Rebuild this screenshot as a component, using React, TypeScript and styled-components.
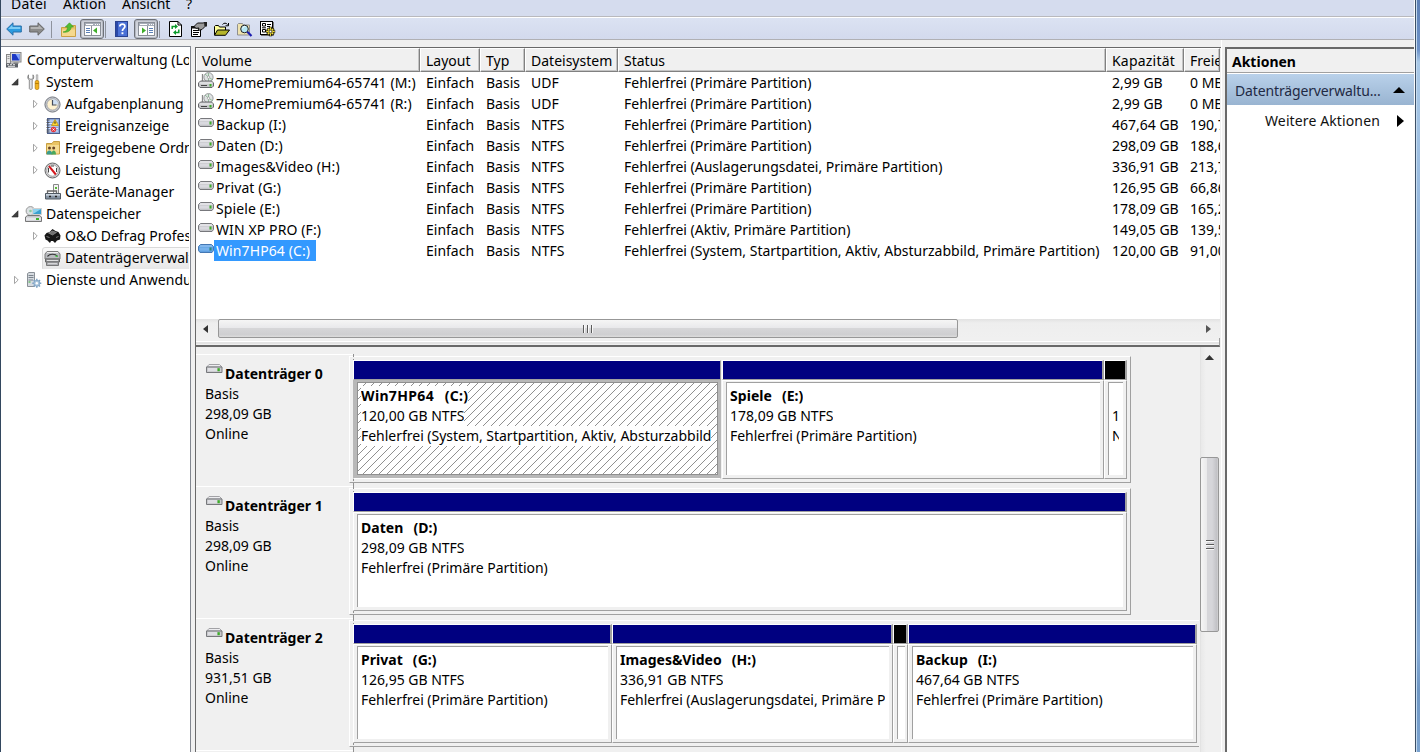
import React from 'react';
import styled, { createGlobalStyle, css } from 'styled-components';

const Global = createGlobalStyle`
  * { box-sizing: border-box; }
  html, body { margin: 0; padding: 0; overflow: hidden; }
  body { font-family: "Noto Sans", "Open Sans", sans-serif; font-size: 14px; color: #000; background: #f0f0f0; }
  svg { display: block; flex: none; }
`;

/* ---------- window frame ---------- */
const Window = styled.div`
  width: 1420px; height: 752px; display: flex; overflow: hidden; background: #f0f0f0;
`;
const LeftEdge = styled.div` width: 1px; background: #33475f; `;
const RightEdge = styled.div`
  width: 5px; border-left: 1px solid #3c4f66;
  background: linear-gradient(90deg, #c5dbef 0 1px, transparent 1px),
    linear-gradient(#5d80b5 0, #6d92c8 50px, #a9c8e6 62px, #8cb0da 300px, #86abd6 520px, #6f98c5 560px, #85abd6 650px, #6f97c4 690px, #7ba3d0 100%);
`;
const Frame = styled.div`
  width: 1414px; display: flex; flex-direction: column; border-right: 1px solid #fbfbfb;
`;
const MenuBar = styled.div`
  height: 17px; background: #d5dcee; border-bottom: 1px solid #b9b9bd; display: flex; overflow: hidden; position: relative;
`;
const MenuItem = styled.span<{ $w: number; $ls?: number }>`
  display: block; width: ${p => p.$w}px; line-height: 20px; margin-top: -6px; padding-left: 10px; white-space: nowrap;
  letter-spacing: ${p => p.$ls ?? 0}px;
`;
const ToolBar = styled.div`
  height: 23px; border-top: 1px solid #fff; border-bottom: 1px solid #b0b0b4; background: linear-gradient(#dbe2f2, #d3daed);
  display: flex; align-items: center; padding: 1px 0 0 5px;
`;
const Tool = styled.div<{ $ml?: number }>` margin-left: ${p => p.$ml ?? 7}px; `;
const ToolPressed = styled.div<{ $ml: number }>`
  width: 24px; height: 20px; margin-left: ${p => p.$ml}px; border: 1px solid #6d7077; border-radius: 3px;
  background: linear-gradient(#c9ccd4, #dfe2ea); box-shadow: inset 0 0 0 1px #b4b8c2;
  display: flex; align-items: center; justify-content: center;
`;
const ToolSep = styled.div<{ $ml: number }>` width: 1px; height: 17px; margin-left: ${p => p.$ml}px; background: #8e939d; `;

const Main = styled.div` flex: 1; display: flex; min-height: 0; `;

/* ---------- navigation tree ---------- */
const TreePane = styled.div`
  width: 190px; margin-top: 6px; border-top: 1px solid #828790; border-right: 1px solid #828790; background: #fff; padding: 2px 1px 0 0;
`;
const TreeRow = styled.div<{ $level: number; $sel?: boolean }>`
  height: 22px; display: flex; align-items: center; overflow: hidden; padding-left: ${p => [5, 10, 29][p.$level]}px; position: relative;
  ${p => p.$sel && css`
    &::before { content: ''; position: absolute; left: 41px; right: -4px; top: 0; height: 22px;
      border: 1px solid #d9d9d9; border-radius: 3px; background: linear-gradient(#fafafa, #e6e6e6); }
  `}
`;
const Expander = styled.div` width: 14px; flex: none; display: flex; `;
const TreeIcon = styled.div<{ $gap: number }>`
  position: relative; width: ${p => (p.$gap === 4 ? 17 : 16)}px; flex: none; display: flex; justify-content: center; margin-right: ${p => p.$gap}px;
`;
const TreeText = styled.span<{ $ls?: number }>`
  position: relative; white-space: nowrap; line-height: 20px; letter-spacing: ${p => p.$ls ?? 0}px;
`;

/* ---------- centre pane ---------- */
const Centre = styled.div`
  width: 1026px; margin: 7px 0 0 4px; border-top: 1px solid #696969; border-left: 1px solid #696969; 
  display: flex; flex-direction: column;
`;
const VolumeArea = styled.div` height: 271px; width: 1024px; background: #fff; overflow: hidden; `;
const cols = '224px 60px 45px 93px 488px 78px 1fr';
const HeadRow = styled.div` display: grid; grid-template-columns: ${cols}; height: 24px; width: 1024px; `;
const HeadCell = styled.div<{ $ls?: number }>`
  background: #f0f0f0; border: 1px solid #fff; border-right: 1px solid #808080; border-bottom: 1px solid #808080;
  box-shadow: inset -1px -1px 0 #c4c4c4; padding-left: 5px; line-height: 23px; white-space: nowrap; overflow: hidden;
  letter-spacing: ${p => p.$ls ?? 0}px;
`;
const VolRow = styled.div` display: grid; grid-template-columns: ${cols}; height: 21px; width: 1024px; `;
const VolName = styled.div` display: flex; align-items: flex-start; padding-left: 2px; `;
const VolLabel = styled.span<{ $sel?: boolean }>`
  height: 21px; line-height: 21px; padding: 0 ${p => (p.$sel ? 6 : 0)}px 0 2px; white-space: nowrap; letter-spacing: 0.1px;
  ${p => p.$sel && css` background: #3399ff; color: #fff; `}
`;
const VolCell = styled.div`
  padding-left: 6px; line-height: 21px; white-space: nowrap; overflow: hidden;
`;
const HScroll = styled.div`
  height: 19px; display: flex; align-items: center; width: 1024px; background: linear-gradient(#e2e2e2, #eeeeee 4px, #f0f0f0); padding-left: 7px;
`;
const HThumb = styled.div`
  width: 740px; height: 19px; margin-left: 10px; border: 1px solid #979797; border-radius: 2px; display: flex; justify-content: center; align-items: center;
  background: linear-gradient(#f5f5f5, #e9e9eb 45%, #d6d6d8 50%, #cfcfd1 85%, #dcdcdc);
`;
const Grow = styled.div` flex: 1; `;
const Splitter = styled.div`
  height: 9px; background: linear-gradient(#f0f0f0 0 3px, #fff 3px 4px, #e4e4e4 4px 6px, #f0f0f0 6px);
  border-bottom: 2px solid #696969; margin-right: 1px; border-right: 1px solid #a0a0a0;
`;
const DiskArea = styled.div` flex: 1; display: flex; min-height: 0; `;
const DiskList = styled.div` width: 1003px; padding-top: 7px; overflow: hidden; `;
const DiskRow = styled.div` height: 131px; margin-bottom: 1px; display: flex; `;
const DiskLabel = styled.div`
  width: 153px; flex: none; padding: 10px 0 0 9px; position: relative;
  &::before { content: ''; position: absolute; left: 0; top: 0; width: 158px; height: 131px; border-top: 1px solid #fff; border-bottom: 1px solid #a0a0a0; }
  &::after { content: ''; position: absolute; left: 157px; top: 0; height: 132px; border-left: 1px dashed #909090; }
`;
const DiskTitle = styled.div`
  display: flex; font-weight: 700; line-height: 20px; gap: 2px; height: 20px; white-space: nowrap; padding-left: 1px;
`;
const DiskLine = styled.div` line-height: 20px; height: 20px; white-space: nowrap; `;
const Graph = styled.div<{ $w: number }>`
  width: ${p => p.$w}px; flex: none; height: 127px; margin-top: 2px; padding: 3px 3px 3px 3px; display: flex;
  border: 1px solid #a0a0a0; border-top-color: #fff; border-left-color: #fff;
`;
const Part = styled.div<{ $w: number; $gap?: number }>`
  width: ${p => p.$w}px; height: 119px; margin-right: ${p => p.$gap ?? 0}px; position: relative; flex: none;
`;
const PartBar = styled.div<{ $c: string; $thin?: boolean }>`
  height: 20px; background: ${p => p.$c}; border: 1px solid #fff; border-bottom-color: #a0a0a0;
  border-right: ${p => (p.$thin ? 1 : 2)}px solid #a0a0a0;
`;
const PartBody = styled.div<{ $sel?: boolean }>`
  height: 99px; padding: 1px 3px 3px 3px; border: 1px solid #fff; border-right-color: #a0a0a0; border-bottom-color: #a0a0a0;
  ${p => p.$sel && css` background: #b8b8b8; border-color: #b8b8b8; padding-right: 2px; border-bottom-color: #fff; `}
`;
const PartInner = styled.div<{ $sel?: boolean }>`
  height: 93px; background: #fff; border-left: 1px solid #a0a0a0; border-top: 1px solid #a0a0a0; overflow: hidden; position: relative; padding: 3px 4px 0 3px;
  ${p => p.$sel && css` border: 1px solid #909090; `}
`;
const Hatch = styled.svg` position: absolute; left: 0; top: 0; `;
const PartLine = styled.div<{ $b?: boolean; $ls?: number }>`
  position: relative; width: fit-content; max-width: 100%; overflow: hidden; height: 20px; line-height: 20px; background: #fff;
  white-space: pre; font-weight: ${p => (p.$b ? 700 : 400)}; letter-spacing: ${p => p.$ls ?? -0.02}px; word-spacing: ${p => (p.$b ? 1.3 : 0)}px;
`;
const VScroll = styled.div`
  width: 20px; margin-left: 1px; border-left: 1px solid #e3e3e3; background: linear-gradient(90deg, #e9e9e9, #f0f0f0 5px);
  display: flex; flex-direction: column; align-items: center; padding: 8px 2px 0 0;
`;
const VThumb = styled.div`
  width: 19px; height: 175px; margin: 97px 0 0 0; border: 1px solid #979797; border-radius: 2px; display: flex; justify-content: center; align-items: center;
  background: linear-gradient(90deg, #f5f5f5, #e9e9eb 35%, #d6d6da 38%, #d6d6da 65%, #c0c0c4 95%, #dcdcdc);
`;
const Seam = styled.div` width: 4px; border-left: 1px solid #fff; background: #f0f0f0; `;

/* ---------- actions pane ---------- */
const Actions = styled.div`
  flex: 1; margin-top: 7px; border-left: 2px solid #696969; border-top: 2px solid #696969; background: #fff;
`;
const ActHead = styled.div`
  height: 24px; background: #f0f0f0; border-bottom: 1px solid #a0a0a0; padding-left: 5px; font-weight: 700; line-height: 26px; 
`;
const ActGroup = styled.div`
  height: 31px; margin-top: 1px; background: linear-gradient(#b9d1ea, #99b4d1); color: #1f2a44; display: flex; align-items: center; justify-content: space-between;
  padding: 1px 9px 0 8px; white-space: nowrap; letter-spacing: -0.14px;
`;
const ActItem = styled.div`
  height: 31px; display: flex; align-items: center; justify-content: space-between; padding: 0 10px 0 38px; white-space: nowrap; color: #111; letter-spacing: 0.12px;
`;

/* ---------- icons ---------- */
const Arrow = ({ c1, c2, st, flip }: { c1: string; c2: string; st: string; flip?: boolean }) => (
  <svg width="16" height="14" viewBox="0 0 16 14">
    <g transform={flip ? 'translate(16 0) scale(-1 1)' : undefined}>
      <path d="M.7 7 7 .8V4h8.3v6H7v3.2Z" fill={c1} stroke={st} />
      <path d="M2.2 7 6.3 3v2h8v2Z" fill={c2} />
    </g>
  </svg>
);
const FolderUp = () => (
  <svg width="15" height="15" viewBox="0 0 15 15">
    <path d="M.5 5.500H6l1-2h7.500V14.500H.5Z" fill="#e9c46a" stroke="#c9a045" />
    <path d="M1 7.500h13v6.500H1Z" fill="#f5d98e" />
    <path d="M2 10c3.500-.5 4.500-2.500 4.500-5H4.300L8.500.8l4 4.200h-2.300C10 8.500 7 11 2 10Z" fill="#52bd35" stroke="#3a9a20" strokeWidth=".6" />
  </svg>
);
const PanelIcon = ({ right }: { right?: boolean }) => (
  <svg width="17" height="14" viewBox="0 0 17 14" shapeRendering="crispEdges">
    <rect x=".5" y=".5" width="16" height="13" fill="#fff" stroke="#8a8f98" />
    <path d="M1 1h15v3H1Z" fill="#a7adb8" />
    <path d="M2 2.500h7M11 2.500h1M13 2.500h1M15 2.500h1" stroke="#fff" />
    <path d={right ? 'M9.500 4v9' : 'M7.500 4v9'} stroke="#8a8f98" />
    <path d={right ? 'M11 6.500h4M11 8.500h4M11 10.500h4' : 'M2 6.500h4M2 8.500h4M2 10.500h4'} stroke="#5b80b8" />
    <path d={right ? 'M4 5.500v6l4-3Z' : 'M13 5.500v6l-4-3Z'} fill="#3fae2a" shapeRendering="auto" />
  </svg>
);
const HelpIcon = () => (
  <svg width="13" height="16" viewBox="0 0 13 16">
    <rect x=".5" y=".5" width="12" height="15" fill="#4a70d6" stroke="#2a4290" />
    <path d="M1 1h2v14H1Z" fill="#2a48a8" />
    <path d="M4.800 5.400C4.800 2.400 9.900 2.500 9.900 5.400 9.900 7.400 7.400 7.300 7.400 10" fill="none" stroke="#fff" strokeWidth="1.700" />
    <rect x="6.500" y="11.300" width="1.900" height="1.900" fill="#fff" />
  </svg>
);
const RefreshDoc = () => (
  <svg width="13" height="16" viewBox="0 0 13 16">
    <path d="M.5.5h8.500l3.500 3.500v11.500H.5Z" fill="#fff" stroke="#000" />
    <path d="M9 .5V4h3.500" fill="none" stroke="#000" />
    <path d="M3.200 8V5.500H7" fill="none" stroke="#0a9a2a" strokeWidth="1.500" /><path d="M6 3 9 5.500 6 8Z" fill="#0a9a2a" />
    <path d="M9.800 8.500v3H6" fill="none" stroke="#0a9a2a" strokeWidth="1.500" /><path d="M7 9 4 11.500 7 14Z" fill="#0a9a2a" />
  </svg>
);
const PropsIcon = () => (
  <svg width="16" height="15" viewBox="0 0 16 15">
    <path d="M.5 4.500h9v10h-9Z" fill="#fff" stroke="#000" />
    <path d="M0 4h9v2.500H0Z" fill="#111" />
    <path d="M2 8.500h6M2 10.500h6M2 12.500h5" stroke="#000" />
    <path d="M3 4.500 6.500 1H12l2-.5v4L11 7.500 7 8.500 8 6 5 6.300Z" fill="#9a9a9a" stroke="#000" strokeWidth=".9" />
    <path d="M13 0h3v4.500h-2Z" fill="#222" />
  </svg>
);
const OpenFolder = () => (
  <svg width="16" height="14" viewBox="0 0 16 14">
    <path d="M.5 13V4.500l1-1h3l1 1.500h6v3" fill="#ffff9a" stroke="#000" />
    <path d="M.5 13.300 3.500 8h12l-4 5.300Z" fill="#b5b52a" stroke="#000" />
    <path d="M8.500 2.500c1.500-1.800 3.500-1.800 5 0M14.500 1v2.800h-3" fill="none" stroke="#000" />
  </svg>
);
const FindFolder = () => (
  <svg width="16" height="15" viewBox="0 0 16 15">
    <path d="M.5 13V2.500l1-1h4l1 1.500h6V13Z" fill="#efe3ae" stroke="#8f8f8f" />
    <circle cx="7.500" cy="7" r="3.800" fill="#b4e6f5" stroke="#222" />
    <path d="M5.500 6.500c.5-1.500 1.500-2 3-2" fill="none" stroke="#fff" />
    <path d="m10.300 9.800 4.200 4.200" stroke="#1b1bb0" strokeWidth="2.200" />
  </svg>
);
const SettingsIcon = () => (
  <svg width="16" height="16" viewBox="0 0 16 16">
    <rect x=".5" y=".5" width="12" height="13" fill="#fff" stroke="#000" />
    <path d="M13.500 1v13.500H1" fill="none" stroke="#777" />
    <path d="M2.500 2.500h3v2.500h-3ZM2.500 8.500h3v2.500h-3Z" fill="#fff" stroke="#000" />
    <path d="M7 3.500h4M7 5.500h3M2 6.800h4" stroke="#000" />
    <g stroke="#000" strokeWidth="2.600"><path d="M10.500 5.800v9.400M5.800 10.500h9.400M7.300 7.300l6.400 6.400M13.700 7.300l-6.400 6.400" /></g>
    <g stroke="#f4e13a" strokeWidth="1.300"><path d="M10.500 6.300v8.400M6.300 10.500h8.400M7.700 7.700l5.600 5.600M13.300 7.700l-5.600 5.600" /></g>
    <circle cx="10.500" cy="10.500" r="1.300" fill="#fff" stroke="#000" strokeWidth=".7" />
  </svg>
);
const ComputerIcon = () => (
  <svg width="16" height="16" viewBox="0 0 16 16">
    <rect x="4.500" y=".5" width="10.500" height="9.500" fill="#d8d8d8" stroke="#888" />
    <rect x="6" y="2" width="7.500" height="6.500" fill="#1d39c4" />
    <path d="M9.500 2h4v6.500Z" fill="#7fa4ff" />
    <rect x=".5" y="2.500" width="4" height="9" fill="#e4e4e4" stroke="#888" />
    <path d="M1.500 4.500h2M1.500 6.500h2" stroke="#999" />
    <path d="M7.500 10h5v2h-5Z" fill="#999" />
    <path d="M0 11.500h12v4H0Z" fill="#5a5f66" />
    <path d="M1 12.700h2M4 12.700h2M7 12.700h2M2 14.300h7" stroke="#e8e8e8" />
  </svg>
);
const ToolsIcon = () => (
  <svg width="16" height="16" viewBox="0 0 16 16">
    <path d="M2.500.8C1 3 2 5.500 3.300 6V14.500c0 1.200 2.900 1.200 2.900 0V6C7.500 5.500 8.500 3 7 .8v3.400l-1 1H4l-1.500-1Z" fill="#dfe1e4" stroke="#777" strokeWidth=".8" />
    <path d="M10.300.8h1.500v6h-1.500Z" fill="#e0e0e0" stroke="#888" strokeWidth=".6" />
    <rect x="9.200" y="6.500" width="3.600" height="9" rx="1.400" fill="#f2b21d" stroke="#b77d06" strokeWidth=".8" />
    <path d="M9.200 9.500h3.600" stroke="#b77d06" />
  </svg>
);
const ClockIcon = () => (
  <svg width="17" height="17" viewBox="0 0 17 17">
    <circle cx="8.500" cy="8.500" r="7.600" fill="#c3c6cc" stroke="#777b83" />
    <circle cx="8.500" cy="8.500" r="5.600" fill="#fff2d0" stroke="#9a9ea6" strokeWidth=".8" />
    <path d="M8.500 2.900a5.600 5.600 0 0 1 5.600 5.600H8.500Z" fill="#cfe0f4" />
    <path d="M8.500 4v5h4" fill="none" stroke="#444c5c" strokeWidth="1.200" />
  </svg>
);
const EventIcon = () => (
  <svg width="16" height="16" viewBox="0 0 16 16">
    <rect x="2.500" y=".5" width="12" height="15" fill="#8ea9dc" stroke="#4d5f8c" />
    <path d="M4 3h9M4 5.500h9M4 8h9M4 10.500h9M4 13h9" stroke="#dfe8f8" />
    <path d="M1.500 2h3M1.500 4.500h3M1.500 7h3M1.500 9.500h3M1.500 12h3M1.500 14h3" stroke="#555" />
    <path d="M10 1.500 13.500 7.500h-7Z" fill="#ffd633" stroke="#b58a00" strokeWidth=".7" />
    <path d="M10 3.500v2.200" stroke="#222" />
    <circle cx="8.500" cy="11.500" r="2.700" fill="#e2383f" /><path d="m7.500 10.500 2 2M9.500 10.500l-2 2" stroke="#fff" strokeWidth=".9" />
  </svg>
);
const SharedIcon = () => (
  <svg width="16" height="16" viewBox="0 0 16 16">
    <path d="M1.500 3.500h5.500l1.500-2h6V14h-13Z" fill="#eac464" stroke="#c79f43" />
    <path d="M2 5h12v8.500H2Z" fill="#f6dc92" />
    <circle cx="4.500" cy="8" r="1.500" fill="#684524" /><path d="M1.500 14.500c0-5.500 5.500-5.500 6 0Z" fill="#3a9c8f" />
    <circle cx="8.700" cy="8" r="1.500" fill="#684524" /><path d="M6.500 14.500c0-5.500 4.500-5.500 4.500 0Z" fill="#4aa85a" />
  </svg>
);
const GaugeIcon = () => (
  <svg width="17" height="17" viewBox="0 0 17 17">
    <circle cx="8.500" cy="8.500" r="7.500" fill="#d3d3d6" stroke="#666" />
    <circle cx="8.500" cy="8.500" r="5.700" fill="#fff" stroke="#888" strokeWidth=".7" />
    <path d="m5 4.200 6.800 8.300" stroke="#d4161c" strokeWidth="2" />
    <path d="M4.500 6v4.500M12.500 6v4M7 4h3" stroke="#444" />
  </svg>
);
const DeviceIcon = () => (
  <svg width="16" height="16" viewBox="0 0 16 16">
    <path d="M8.500.5h5v9h-5Z" fill="#f5f5f5" stroke="#888" /><path d="M10 3h2v2h-2Z" fill="#58b83a" />
    <path d="M2.500 9V7h9v2" fill="none" stroke="#666" strokeWidth="1.300" />
    <path d="M.5 9.500h15v5.500H.5Z" fill="#8593a3" stroke="#4f5963" />
    <path d="M1 10h14v1.700H1Z" fill="#c8d2dc" /><path d="M4 12.500h2M10 12.500h2" stroke="#222" strokeWidth="1.500" />
  </svg>
);
const StorageIcon = () => (
  <svg width="17" height="16" viewBox="0 0 17 16">
    <circle cx="5.500" cy="5" r="4.400" fill="#dce1e4" stroke="#999" /><circle cx="5.500" cy="5" r="1.300" fill="#8fc8a0" />
    <path d="M7.500 2.500h9v6h-9Z" fill="#3aa0cf" stroke="#d0d0d0" /><path d="M8 3h8L8 8Z" fill="#8fd2ee" />
    <path d="M2.500 9.500h12l2 1.500v4.500H.5V11Z" fill="#c4c6ca" stroke="#777" />
    <path d="M1 11.500h15v3H1Z" fill="#e6e6ea" /><path d="M11 12h3v2h-3Z" fill="#3fb22c" />
  </svg>
);
const DefragIcon = () => (
  <svg width="17" height="16" viewBox="0 0 17 16">
    <path d="M.5 7.500 2.500 5l3-1L8.500 1l3 2 3 1 2 3.500-.5 4-3 1L11 15l-2-2H7l-1 2-2.500-2.500-2-1Z" fill="#161616" />
    <path d="M4.500 5 8.500 3l4 1.500-4 2.500Z" fill="#707070" stroke="#9a9a9a" strokeWidth=".6" />
    <path d="m2.500 8.500 3 1M12 9.500l2.500-1" stroke="#777" />
  </svg>
);
const DiskMgmtIcon = () => (
  <svg width="17" height="17" viewBox="0 0 17 17">
    <path d="M3 1.500h11l2 2.500v5H1V4Z" fill="#b9bbbf" stroke="#7a7a7a" />
    <path d="M3 2.500h11" stroke="#eee" /><path d="M3.500 6.500c2-3 8-3 10 0" fill="none" stroke="#333" strokeWidth="1.200" />
    <path d="M11.500 5.500h2v1.500h-2Z" fill="#4c4" />
    <path d="M1.500 9h14v3h-14Z" fill="#9b9da1" stroke="#666" /><path d="M2.500 12h12v3.500h-12Z" fill="#a9abaf" stroke="#777" />
    <path d="M3 10.500h11M4 13.700h9" stroke="#e0e0e0" />
  </svg>
);
const ServicesIcon = () => (
  <svg width="16" height="17" viewBox="0 0 16 17">
    <path d="M1.500 1.500 3 .5h5.500v14H1.500Z" fill="#d6dbe0" stroke="#8a9097" />
    <path d="M2.500 3.500H7.500M2.500 5.500H7.500M2.500 8H7" stroke="#7b838c" /><path d="M2.500 10h2" stroke="#3a3" />
    <g stroke="#7fa3c4" strokeWidth="1.500"><path d="M10.800 6.800v9M6.300 11.300h9M7.600 8.100l6.400 6.400M14 8.100l-6.400 6.400" /></g>
    <circle cx="10.800" cy="11.300" r="3" fill="#a9c4dc" stroke="#7fa3c4" strokeWidth=".8" /><circle cx="10.800" cy="11.300" r="1.200" fill="#fff" />
  </svg>
);
const Tri = ({ open }: { open?: boolean }) =>
  open ? (
    <svg width="8" height="8" viewBox="0 0 8 8"><path d="M7 .8v6.200H.8Z" fill="#404040" stroke="#262626" strokeWidth=".6" /></svg>
  ) : (
    <svg width="8" height="10" viewBox="0 0 8 10"><path d="M3.500 1.200v7.400L7.200 5Z" fill="#fff" stroke="#a5a5a5" /></svg>
  );
const DriveIcon = ({ blue }: { blue?: boolean }) => (
  <svg width="16" height="20" viewBox="0 -4 16 20">
    <path d="M2.500.5h11l2 2v4l-1.500 2H2L.5 6.500v-4Z" fill={blue ? '#5f9fe0' : '#c3c4c8'} stroke={blue ? '#4578b4' : '#77787c'} />
    <path d="M2.500 1.300h11l1 1.500h-13Z" fill={blue ? '#8fc0f2' : '#ececf0'} />
    <path d="M1.500 3.500h10v3.200h-10Z" fill={blue ? '#77b2ec' : '#d9d9df'} />
    <path d="M11.500 3.500h2v3h-2Z" fill={blue ? '#2f8a78' : '#3cae28'} />
  </svg>
);
const FlatDrive = () => (
  <svg width="17" height="10" viewBox="0 0 17 10">
    <path d="M3 .5h10.500l2.500 2.500H.8Z" fill="#ededf0" stroke="#a2a2a6" />
    <path d="M.5 3h15.500v5.500H.5Z" fill="#c9cacd" stroke="#77787c" />
    <path d="M2 4h9v3.200H2Z" fill="#dfdfe4" /><path d="M11.500 4.200h2.300v3h-2.300Z" fill="#3cae28" />
  </svg>
);
const OpticalIcon = () => (
  <svg width="16" height="18" viewBox="0 0 16 18">
    <circle cx="10.500" cy="5.200" r="4.600" fill="#dfe3e3" stroke="#97999c" />
    <path d="M10.500 5.200 7 2M10.500 5.200l4 2.500M10.500 1v8.500" stroke="#7fb089" strokeWidth=".8" /><circle cx="10.500" cy="5.200" r="1.200" fill="#fff" stroke="#888" strokeWidth=".6" />
    <path d="M4.500 2v7" stroke="#8a8a8a" strokeWidth="1.300" />
    <path d="M2.500 9h11l2 2v3L14 15.500H2L.5 14v-3Z" fill="#c6c7ca" stroke="#66676b" />
    <path d="M1.500 11h13" stroke="#f4f4f6" /><path d="M3 13.500h6" stroke="#444" /><path d="M11.500 12h2v2.500h-2Z" fill="#3cae28" />
  </svg>
);

/* ---------- data ---------- */
type Node = { t: string; l: 0 | 1 | 2; i: React.ReactNode; e?: 'o' | 'c'; sel?: boolean; ls?: number };
const tree: Node[] = [
  { t: 'Computerverwaltung (Lokal)', l: 0, i: <ComputerIcon /> },
  { t: 'System', l: 1, i: <ToolsIcon />, e: 'o' },
  { t: 'Aufgabenplanung', l: 2, i: <ClockIcon />, e: 'c' },
  { t: 'Ereignisanzeige', l: 2, i: <EventIcon />, e: 'c', ls: 0.05 },
  { t: 'Freigegebene Ordner', l: 2, i: <SharedIcon />, e: 'c' },
  { t: 'Leistung', l: 2, i: <GaugeIcon />, e: 'c', ls: -0.1 },
  { t: 'Geräte-Manager', l: 2, i: <DeviceIcon />, ls: 0.07 },
  { t: 'Datenspeicher', l: 1, i: <StorageIcon />, e: 'o', ls: -0.05 },
  { t: 'O&O Defrag Professional', l: 2, i: <DefragIcon />, e: 'c' },
  { t: 'Datenträgerverwaltung', l: 2, i: <DiskMgmtIcon />, sel: true },
  { t: 'Dienste und Anwendungen', l: 1, i: <ServicesIcon />, e: 'c' },
];
const P = 'Fehlerfrei (Primäre Partition)';
const volumes = [
  ['7HomePremium64-65741 (M:)', 'UDF', P, '2,99 GB', '0 MB'],
  ['7HomePremium64-65741 (R:)', 'UDF', P, '2,99 GB', '0 MB'],
  ['Backup (I:)', 'NTFS', P, '467,64 GB', '190,75 GB'],
  ['Daten (D:)', 'NTFS', P, '298,09 GB', '188,60 GB'],
  ['Images&Video (H:)', 'NTFS', 'Fehlerfrei (Auslagerungsdatei, Primäre Partition)', '336,91 GB', '213,70 GB'],
  ['Privat (G:)', 'NTFS', P, '126,95 GB', '66,86 GB'],
  ['Spiele (E:)', 'NTFS', P, '178,09 GB', '165,20 GB'],
  ['WIN XP PRO (F:)', 'NTFS', 'Fehlerfrei (Aktiv, Primäre Partition)', '149,05 GB', '139,50 GB'],
  ['Win7HP64 (C:)', 'NTFS', 'Fehlerfrei (System, Startpartition, Aktiv, Absturzabbild, Primäre Partition)', '120,00 GB', '91,00 GB'],
];
type PartT = { w: number; gap?: number; lines?: string[]; black?: boolean; sel?: boolean };
const disks: { n: string; size: string; w: number; parts: PartT[] }[] = [
  { n: 'Datenträger 0', size: '298,09 GB', w: 782, parts: [
    { w: 368, gap: 1, sel: true, lines: ['Win7HP64  (C:)', '120,00 GB NTFS', 'Fehlerfrei (System, Startpartition, Aktiv, Absturzabbild'] },
    { w: 382, lines: ['Spiele  (E:)', '178,09 GB NTFS', P] },
    { w: 23, black: true, lines: ['', '1', 'N'] }] },
  { n: 'Datenträger 1', size: '298,09 GB', w: 782, parts: [{ w: 774, lines: ['Daten  (D:)', '298,09 GB NTFS', P] }] },
  { n: 'Datenträger 2', size: '931,51 GB', w: 860, parts: [
    { w: 259, lines: ['Privat  (G:)', '126,95 GB NTFS', P] },
    { w: 281, lines: ['Images&Video  (H:)', '336,91 GB NTFS', 'Fehlerfrei (Auslagerungsdatei, Primäre Partition)'] },
    { w: 15, black: true },
    { w: 289, lines: ['Backup  (I:)', '467,64 GB NTFS', P] }] },
];

export default function App() {
  return (
    <Window>
      <Global />
      <LeftEdge />
      <Frame>
        <MenuBar>
          <MenuItem $w={52} $ls={0.25}>Datei</MenuItem>
          <MenuItem $w={59} $ls={0.2}>Aktion</MenuItem>
          <MenuItem $w={64}>Ansicht</MenuItem>
          <MenuItem $w={30}>?</MenuItem>
        </MenuBar>
        <ToolBar>
          <Tool $ml={0}><Arrow c1="#2b9be0" c2="#7cccf5" st="#2a6ea8" /></Tool>
          <Tool><Arrow c1="#8b8b8b" c2="#b4b4b4" st="#666" flip /></Tool>
          <ToolSep $ml={6} />
          <Tool $ml={9}><FolderUp /></Tool>
          <ToolPressed $ml={4}><PanelIcon /></ToolPressed>
          <ToolSep $ml={1} />
          <Tool $ml={9}><HelpIcon /></Tool>
          <ToolPressed $ml={6}><PanelIcon right /></ToolPressed>
          <ToolSep $ml={1} />
          <Tool $ml={9}><RefreshDoc /></Tool>
          <Tool $ml={9}><PropsIcon /></Tool>
          <Tool><OpenFolder /></Tool>
          <Tool><FindFolder /></Tool>
          <Tool><SettingsIcon /></Tool>
        </ToolBar>
        <Main>
          <TreePane>
            {tree.map(n => (
              <TreeRow key={n.t} $level={n.l} $sel={n.sel}>
                {n.l > 0 && <Expander>{n.e && <Tri open={n.e === 'o'} />}</Expander>}
                <TreeIcon $gap={n.l === 0 ? 5 : 4}>{n.i}</TreeIcon>
                <TreeText $ls={n.ls}>{n.t}</TreeText>
              </TreeRow>
            ))}
          </TreePane>
          <Centre>
            <VolumeArea>
              <HeadRow>
                {['Volume', 'Layout', 'Typ', 'Dateisystem', 'Status', 'Kapazität', 'Freier Speicher'].map(h => (
                  <HeadCell key={h} $ls={h === 'Kapazität' ? 0.2 : 0}>{h}</HeadCell>
                ))}
              </HeadRow>
              {volumes.map((v, i) => (
                <VolRow key={v[0]}>
                  <VolName>
                    {i < 2 ? <OpticalIcon /> : <DriveIcon blue={i === 8} />}
                    <VolLabel $sel={i === 8}>{v[0]}</VolLabel>
                  </VolName>
                  <VolCell>Einfach</VolCell>
                  <VolCell>Basis</VolCell>
                  <VolCell>{v[1]}</VolCell>
                  <VolCell>{v[2]}</VolCell>
                  <VolCell>{v[3]}</VolCell>
                  <VolCell>{v[4]}</VolCell>
                </VolRow>
              ))}
            </VolumeArea>
            <HScroll>
              <svg width="5" height="8"><path d="M5 0v8L0 4Z" fill="#333" /></svg>
              <HThumb>
                <svg width="10" height="8" shapeRendering="crispEdges"><path d="M.5 0v8M4.500 0v8M8.500 0v8" stroke="#5a5a5a" /><path d="M1.500 0v8M5.500 0v8M9.500 0v8" stroke="#f8f8f8" /></svg>
              </HThumb>
              <Grow />
              <svg width="14" height="8"><path d="M0 0v8l5-4Z" fill="#555" /></svg>
            </HScroll>
            <Splitter />
            <DiskArea>
              <DiskList>
                {disks.map(d => (
                  <DiskRow key={d.n}>
                    <DiskLabel>
                      <DiskTitle><FlatDrive />{d.n}</DiskTitle>
                      <DiskLine>Basis</DiskLine>
                      <DiskLine>{d.size}</DiskLine>
                      <DiskLine>Online</DiskLine>
                    </DiskLabel>
                    <Graph $w={d.w}>
                      {d.parts.map((p, i) => (
                        <Part key={i} $w={p.w} $gap={p.gap}>
                          <PartBar $c={p.black ? '#000' : '#000080'} $thin={p.sel} />
                          <PartBody $sel={p.sel}>
                            <PartInner $sel={p.sel}>
                              {p.sel && (
                                <Hatch width="360" height="92" shapeRendering="crispEdges">
                                  <defs><pattern id="hatch" width="8" height="8" patternUnits="userSpaceOnUse">
                                    {[0, 1, 2, 3, 4, 5, 6, 7].map(k => <rect key={k} x={7 - k} y={k} width="1" height="1" fill="#909090" />)}
                                  </pattern></defs>
                                  <rect width="360" height="92" fill="url(#hatch)" />
                                </Hatch>
                              )}
                              {p.lines?.map((t, k) => (
                                <PartLine key={k} $b={k === 0} $ls={k > 0 ? undefined : p.sel ? 0.35 : 0.05}>{t}</PartLine>
                              ))}
                            </PartInner>
                          </PartBody>
                        </Part>
                      ))}
                    </Graph>
                  </DiskRow>
                ))}
                <DiskRow><DiskLabel /></DiskRow>
              </DiskList>
              <VScroll>
                <svg width="9" height="5"><path d="M0 5h9L4.500 0Z" fill="#333" /></svg>
                <VThumb>
                  <svg width="8" height="10" shapeRendering="crispEdges"><path d="M0 .5h8M0 4.500h8M0 8.500h8" stroke="#5a5a5a" /><path d="M0 1.500h8M0 5.500h8M0 9.500h8" stroke="#f8f8f8" /></svg>
                </VThumb>
              </VScroll>
            </DiskArea>
          </Centre>
          <Seam />
          <Actions>
            <ActHead>Aktionen</ActHead>
            <ActGroup>Datenträgerverwaltu...<svg width="12" height="6"><path d="M0 6h12L6 0Z" fill="#000" /></svg></ActGroup>
            <ActItem>Weitere Aktionen<svg width="7" height="12"><path d="M0 0v12l7-6Z" fill="#000" /></svg></ActItem>
          </Actions>
        </Main>
      </Frame>
      <RightEdge />
    </Window>
  );
}
